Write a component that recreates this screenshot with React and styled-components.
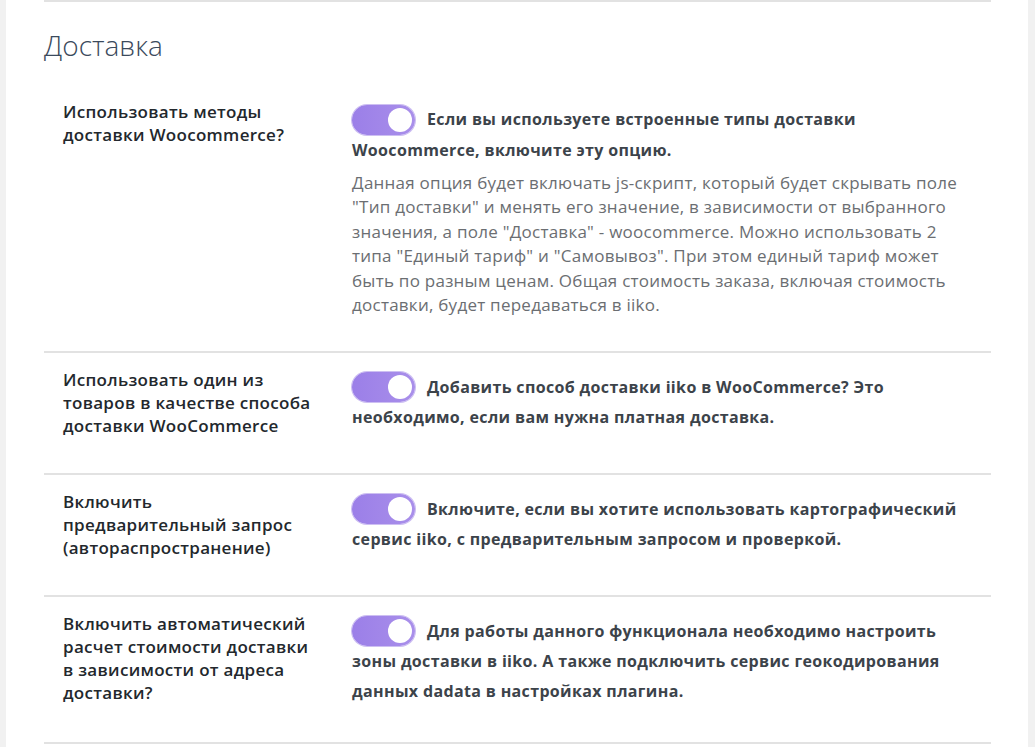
import React from "react";
import styled, { createGlobalStyle } from "styled-components";

const GlobalStyle = createGlobalStyle`
  body {
    margin: 0;
    background: #f1f1f1;
    font-family: "Open Sans", "Noto Sans", sans-serif;
  }
`;

const rows = [
  {
    label: "Использовать методы доставки Woocommerce?",
    title:
      "Если вы используете встроенные типы доставки Woocommerce, включите эту опцию.",
    desc:
      'Данная опция будет включать js-скрипт, который будет скрывать поле "Тип доставки" и менять его значение, в зависимости от выбранного значения, а поле "Доставка" - woocommerce. Можно использовать 2 типа "Единый тариф" и "Самовывоз". При этом единый тариф может быть по разным ценам. Общая стоимость заказа, включая стоимость доставки, будет передаваться в iiko.',
  },
  {
    label: "Использовать один из товаров в качестве способа доставки WooCommerce",
    title:
      "Добавить способ доставки iiko в WooCommerce? Это необходимо, если вам нужна платная доставка.",
  },
  {
    label: "Включить предварительный запрос (автораспространение)",
    title:
      "Включите, если вы хотите использовать картографический сервис iiko, с предварительным запросом и проверкой.",
  },
  {
    label:
      "Включить автоматический расчет стоимости доставки в зависимости от адреса доставки?",
    title:
      "Для работы данного функционала необходимо настроить зоны доставки в iiko. А также подключить сервис геокодирования данных dadata в настройках плагина.",
  },
];

const Page = styled.div`
  padding: 0 7px 0 6px;
  min-height: 747px;
`;

const Panel = styled.div`
  background: #fff;
  min-height: 747px;
  padding: 0 37px 0 38px;
  box-sizing: border-box;
`;

const Section = styled.section`
  border-top: 2px solid #e2e2e2;
`;

const Heading = styled.h2`
  margin: 0;
  padding: 24px 0 0 0;
  font-size: 28px;
  line-height: 38px;
  font-weight: 300;
  color: #3b4a5c;
`;

const Row = styled.div`
  display: grid;
  grid-template-columns: 289px 1fr;
  padding: ${(p) => (p.$first ? "36px" : "15px")} 29px 36px 19px;
  border-bottom: 2px solid #e2e2e2;
`;

const Label = styled.div`
  font-size: 17px;
  line-height: 23px;
  font-weight: 600;
  letter-spacing: 0.3px;
  color: #23282d;
  width: 252px;
`;

const Cell = styled.div`
  padding-top: 4px;
`;

const Title = styled.div`
  font-size: 16px;
  font-weight: 700;
  line-height: 30px;
  letter-spacing: 0.35px;
  color: #3c434a;
`;

const Switch = styled.span`
  display: inline-block;
  vertical-align: middle;
  position: relative;
  width: 63px;
  height: 30px;
  border-radius: 16px;
  margin: -2px 12px 0 0;
  background: linear-gradient(90deg, #9b7fe8 0%, #a98fea 100%);
  box-shadow: 0 0 0 1px #cdbff2;

  &::after {
    content: "";
    position: absolute;
    right: 3px;
    top: 3px;
    width: 24px;
    height: 24px;
    border-radius: 50%;
    background: #fff;
  }
`;

const Desc = styled.p`
  margin: 6px 0 -3px;
  font-size: 17px;
  line-height: 24.5px;
  letter-spacing: 0.25px;
  color: #6b6e72;
`;

export default function App() {
  return (
    <Page>
      <GlobalStyle />
      <Panel>
        <Section>
          <Heading>Доставка</Heading>
          {rows.map((r, i) => (
            <Row key={i} $first={i === 0}>
              <Label>{r.label}</Label>
              <Cell>
                <Title>
                  <Switch />
                  {r.title}
                </Title>
                {r.desc && <Desc>{r.desc}</Desc>}
              </Cell>
            </Row>
          ))}
        </Section>
      </Panel>
    </Page>
  );
}
